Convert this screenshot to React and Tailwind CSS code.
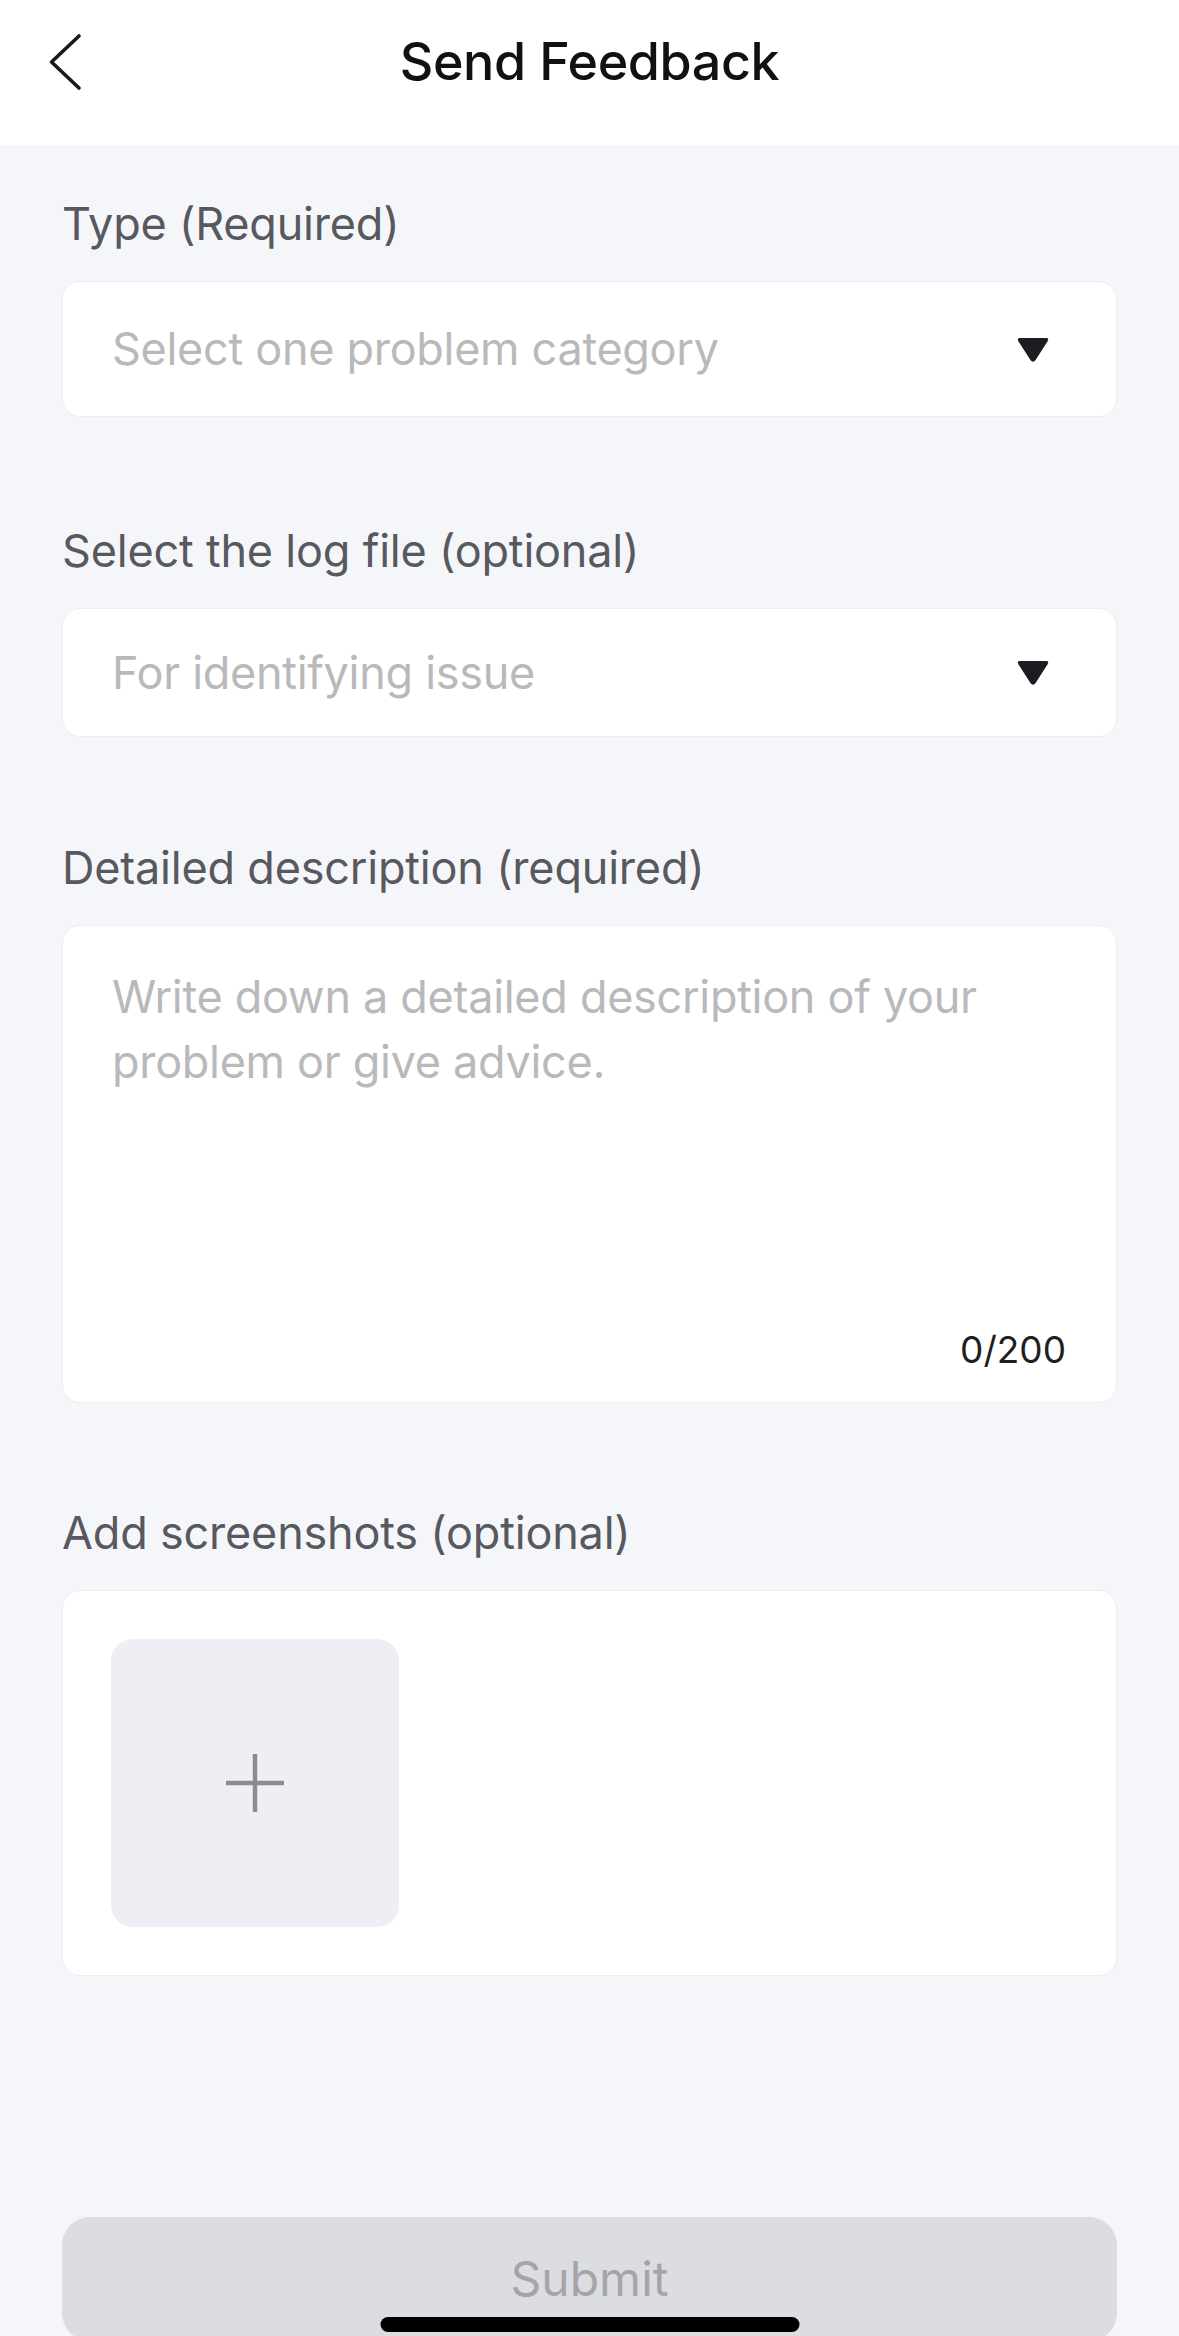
import { useState } from 'react'

function Caret() {
  return (
    <svg width="34" height="27" viewBox="0 0 34 27" className="shrink-0">
      <path d="M4 2 H30 Q33.5 2 31.6 5.2 L19.6 24 Q17 27.5 14.4 24 L2.4 5.2 Q0.5 2 4 2 Z" fill="#1c1c22" />
    </svg>
  )
}

function Label({ children }) {
  return (
    <p className="text-[45px] leading-[54px] text-[#58595e] mb-[30px] tracking-[-0.2px]">{children}</p>
  )
}

export default function App() {
  const [text, setText] = useState('')

  return (
    <div
      className="relative h-[2336px] overflow-hidden bg-[#f5f6fa]"
      style={{ fontFamily: 'Inter, "Noto Sans", sans-serif' }}
    >
      {/* --- HEADER --- */}
      <header className="bg-white h-[145px] pb-[22px]">
        <div className="grid grid-cols-[1fr_auto_1fr] items-center h-full">
          <button className="pl-[48px] flex items-center">
            <svg width="34" height="58" viewBox="0 0 34 58" fill="none">
              <polyline
                points="31,3 3.5,29 31,55"
                stroke="#1a1a1a"
                strokeWidth="3.6"
                strokeLinecap="round"
                strokeLinejoin="round"
              />
            </svg>
          </button>
          <h1 className="text-[52px] font-medium text-[#111] leading-none tracking-[-0.4px]">
            Send Feedback
          </h1>
          <div />
        </div>
      </header>

      {/* --- FORM --- */}
      <div className="px-[62px] pt-[52px]">
        <Label>Type (Required)</Label>
        <div className="h-[136px] bg-white rounded-[18px] border border-[#ededf1] flex items-center justify-between pl-[49px] pr-[66px]">
          <span className="text-[45px] text-[#b9b9bb] tracking-[-0.3px]">Select one problem category</span>
          <Caret />
        </div>

        <div className="mt-[107px]">
          <Label>Select the log file (optional)</Label>
          <div className="h-[129px] bg-white rounded-[18px] border border-[#ededf1] flex items-center justify-between pl-[49px] pr-[66px]">
            <span className="text-[45px] text-[#b9b9bb] tracking-[-0.3px]">For identifying issue</span>
            <Caret />
          </div>
        </div>

        <div className="mt-[104px]">
          <Label>Detailed description (required)</Label>
          <div className="h-[478px] bg-white rounded-[18px] border border-[#ededf1] flex flex-col pt-[38px] pb-[30px] pl-[49px] pr-[50px]">
            <textarea
              value={text}
              onChange={(e) => setText(e.target.value.slice(0, 200))}
              placeholder="Write down a detailed description of your problem or give advice."
              className="flex-1 resize-none bg-transparent outline-none text-[45px] leading-[65px] tracking-[-0.3px] text-[#222] placeholder:text-[#b9b9bb]"
            />
            <span className="self-end text-[37px] leading-[44px] text-[#1f1f1f]">
              {text.length}/200
            </span>
          </div>
        </div>

        <div className="mt-[103px]">
          <Label>Add screenshots (optional)</Label>
          <div className="bg-white rounded-[18px] border border-[#ededf1] p-[48px]">
            <button className="w-[288px] h-[288px] rounded-[22px] bg-[#edeff4] flex items-center justify-center">
              <svg width="58" height="58" viewBox="0 0 58 58">
                <path d="M29 1 V57 M1 29 H57" stroke="#8a8c91" strokeWidth="4.4" strokeLinecap="round" />
              </svg>
            </button>
          </div>
        </div>

        <button className="mt-[241px] w-full h-[124px] rounded-[28px] bg-[#dcdde0] text-[48px] text-[#a4a5a9] flex items-center justify-center">
          Submit
        </button>
      </div>

      {/* home indicator */}
      <div className="absolute bottom-[4px] left-1/2 -translate-x-1/2 w-[419px] h-[15px] rounded-full bg-black" />
    </div>
  )
}
